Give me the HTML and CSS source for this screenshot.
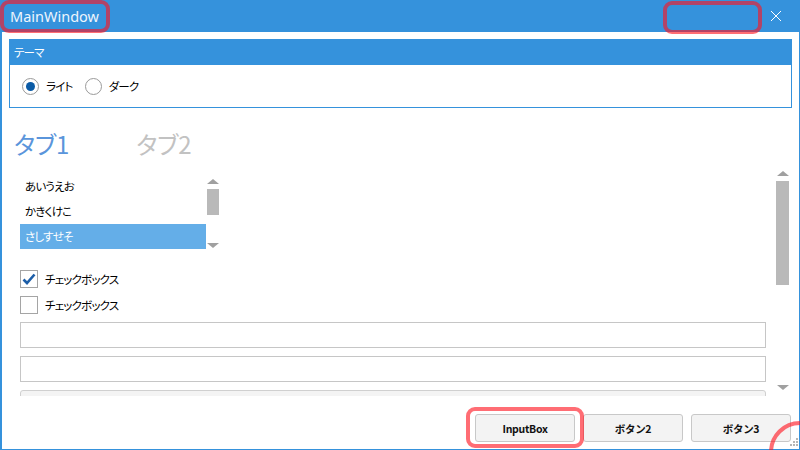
FILE: index.html
```html
<!DOCTYPE html>
<html lang="ja">
<head>
    <meta charset="UTF-8">
    <title>MainWindow</title>
    <link rel="stylesheet" href="styles.css">
</head>
<body>
    <div class="window">
        <div class="titlebar">
            <span class="title">MainWindow</span>
            <svg class="close" width="12" height="12" viewBox="0 0 12 12">
                <path d="M1 1 L11 11 M11 1 L1 11" stroke="#fff" stroke-width="1" fill="none"/>
            </svg>
        </div>
        <div class="client">
            <div class="group">
                <div class="group-head">テーマ</div>
                <div class="group-body">
                    <label class="radio checked"><span class="circle"></span>ライト</label>
                    <label class="radio"><span class="circle"></span>ダーク</label>
                </div>
            </div>

            <div class="tabs">
                <span class="tab active">タブ1</span>
                <span class="tab">タブ2</span>
            </div>

            <div class="scroller">
                <div class="scroll-content">
                    <div class="listbox">
                        <div class="items">
                            <div class="item">あいうえお</div>
                            <div class="item">かきくけこ</div>
                            <div class="item selected">さしすせそ</div>
                        </div>
                        <div class="mini-scroll">
                            <span class="arrow-up"></span>
                            <span class="mini-thumb"></span>
                            <span class="spacer"></span>
                            <span class="arrow-down"></span>
                        </div>
                    </div>

                    <div class="checks">
                        <label class="check checked">
                            <span class="box">
                                <svg width="16" height="16" viewBox="0 0 16 16">
                                    <path d="M2.5 8.5 L6 12 L13.5 3.5" stroke="#1d5ea8" stroke-width="2.6" fill="none"/>
                                </svg>
                            </span>
                            チェックボックス
                        </label>
                        <label class="check"><span class="box"></span>チェックボックス</label>
                    </div>

                    <div class="textbox"></div>
                    <div class="textbox"></div>
                    <div class="cut-button"></div>
                </div>
                <div class="vscroll">
                    <span class="arrow-up"></span>
                    <span class="thumb"></span>
                    <span class="spacer"></span>
                    <span class="arrow-down"></span>
                </div>
            </div>

            <div class="footer">
                <button class="btn">InputBox</button>
                <button class="btn">ボタン2</button>
                <button class="btn">ボタン3</button>
            </div>
        </div>

        <svg class="grip" width="11" height="11" viewBox="0 0 11 11">
            <g fill="#b5b5b5">
                <rect x="9" y="1" width="2" height="2"/>
                <rect x="6" y="4" width="2" height="2"/>
                <rect x="9" y="4" width="2" height="2"/>
                <rect x="3" y="7" width="2" height="2"/>
                <rect x="6" y="7" width="2" height="2"/>
                <rect x="9" y="7" width="2" height="2"/>
            </g>
        </svg>

        <!-- annotation marks -->
        <div class="mark mark-title"></div>
        <div class="mark mark-caption"></div>
        <div class="mark mark-inputbox"></div>
        <div class="mark mark-grip"></div>
    </div>
</body>
</html>
```

FILE: styles.css
```css
body {
    margin: 0;
    font-family: "Noto Sans CJK JP", sans-serif;
    font-size: 11.5px;
    letter-spacing: -0.8px;
    font-feature-settings: "palt";
    color: #000;
    overflow: hidden;
}
.window {
    position: relative;
    width: 800px;
    height: 450px;
    background-color: #3592dc;
    display: flex;
    flex-direction: column;
    overflow: hidden;
}
.titlebar {
    height: 32px;
    display: flex;
    align-items: center;
    padding: 0 18px 0 10px;
    color: #eef5fd;
}
.title {
    flex: 1;
    font-family: "Noto Sans", sans-serif;
    font-size: 14.5px;
    letter-spacing: 0;
    font-feature-settings: normal;
}
.close {
    display: block;
}
.client {
    flex: 1;
    background-color: #fff;
    margin: 0 1px 1px 2px;
    display: flex;
    flex-direction: column;
}
.group {
    margin: 7px 7px 0 7px;
    border: 1px solid #3592dc;
}
.group-head {
    background-color: #3592dc;
    color: #fff;
    height: 25px;
    line-height: 25px;
    padding-left: 4px;
}
.group-body {
    height: 42px;
    display: flex;
    align-items: center;
    padding-left: 12px;
}
.radio {
    display: flex;
    align-items: center;
    gap: 7px;
    margin-right: 12px;
}
.radio .circle {
    width: 15px;
    height: 15px;
    border: 1px solid #9a9a9a;
    border-radius: 50%;
    display: flex;
    align-items: center;
    justify-content: center;
}
.radio.checked .circle::after {
    content: "";
    width: 9px;
    height: 9px;
    border-radius: 50%;
    background-color: #0b5ba6;
}
.tabs {
    margin-top: 20px;
    height: 32px;
    line-height: 32px;
    padding-left: 12px;
    font-size: 24px;
    letter-spacing: 0;
    display: flex;
}
.tab {
    color: #c2c2c2;
    margin-right: 67px;
}
.tab.active {
    color: #5a95db;
}
.scroller {
    margin-top: 4px;
    height: 232px;
    display: flex;
}
.scroll-content {
    flex: 1;
    padding: 10px 1px 0 18px;
    overflow: hidden;
}
.listbox {
    display: flex;
    width: 200px;
    height: 76px;
}
.items {
    width: 186px;
}
.item {
    height: 25px;
    line-height: 25px;
    padding-left: 5px;
}
.item.selected {
    background-color: #64aee8;
    color: #fff;
}
.mini-scroll {
    width: 14px;
    display: flex;
    flex-direction: column;
    align-items: center;
    padding: 5px 0 2px 0;
    box-sizing: border-box;
}
.arrow-up {
    width: 0;
    height: 0;
    border-left: 6px solid transparent;
    border-right: 6px solid transparent;
    border-bottom: 5px solid #a0a0a0;
}
.arrow-down {
    width: 0;
    height: 0;
    border-left: 6px solid transparent;
    border-right: 6px solid transparent;
    border-top: 5px solid #a0a0a0;
}
.spacer {
    flex: 1;
}
.mini-thumb {
    width: 12px;
    height: 26px;
    margin-top: 5px;
    background-color: #b9b9b9;
}
.checks {
    margin-top: 16px;
}
.check {
    height: 26px;
    display: flex;
    align-items: center;
    gap: 7px;
}
.check .box {
    width: 16px;
    height: 16px;
    border: 1px solid #a5a5a5;
    display: flex;
    align-items: center;
    justify-content: center;
}
.textbox {
    height: 24px;
    border: 1px solid #c6c6c6;
    margin-top: 8px;
}
.checks + .textbox {
    margin-top: 4px;
}
.cut-button {
    height: 24px;
    margin-top: 8px;
    border: 1px solid #d0d0d0;
    border-radius: 3px;
    background-color: #f4f4f4;
}
.vscroll {
    width: 13px;
    margin: 0 10px 0 9px;
    padding: 7px 0 6px 0;
    display: flex;
    flex-direction: column;
    align-items: center;
}
.vscroll .thumb {
    width: 13px;
    height: 104px;
    margin-top: 5px;
    background-color: #b9b9b9;
}
.footer {
    display: flex;
    justify-content: flex-end;
    gap: 8px;
    padding: 18px 8px 0 0;
}
.btn {
    width: 100px;
    height: 28px;
    background-color: #f3f3f3;
    border: 1px solid #c8c8c8;
    border-radius: 3px;
    font-family: "Noto Sans CJK JP", sans-serif;
    font-size: 10.5px;
    font-weight: bold;
    letter-spacing: -0.3px;
    color: #111;
    padding: 0;
}
.grip {
    position: absolute;
    right: 2px;
    bottom: 2px;
}
.mark {
    position: absolute;
    border: 4px solid rgba(255, 20, 30, 0.62);
    border-radius: 9px;
    box-sizing: border-box;
}
.mark-title {
    left: 0;
    top: 0;
    width: 110px;
    height: 33px;
}
.mark-caption {
    left: 663px;
    top: 1px;
    width: 99px;
    height: 33px;
}
.mark-inputbox {
    left: 466px;
    top: 407px;
    width: 118px;
    height: 41px;
}
.mark-grip {
    left: 769px;
    top: 421px;
    width: 62px;
    height: 62px;
    border-radius: 50%;
}
```
